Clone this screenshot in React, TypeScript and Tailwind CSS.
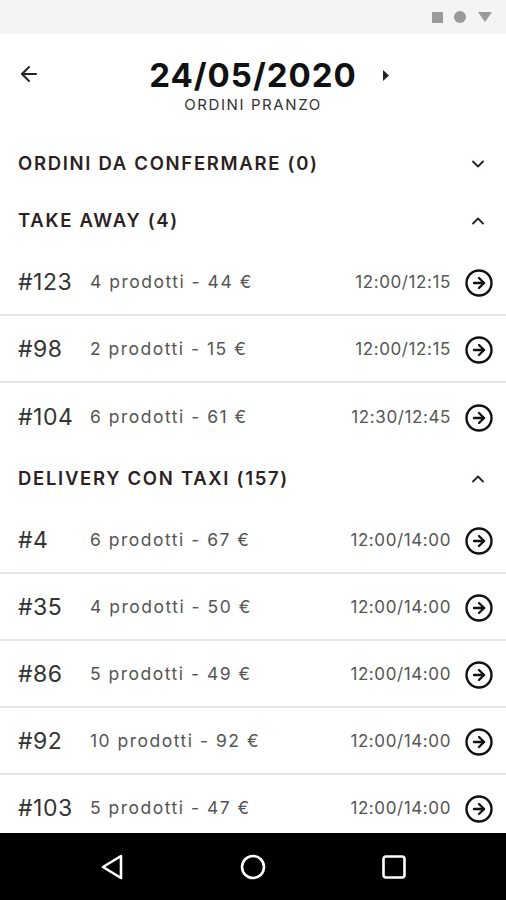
import { ArrowLeft, ChevronDown, ChevronUp, CircleArrowRight } from "lucide-react";

interface Order {
  id: string;
  products: string;
  time: string;
}

const takeAway: Order[] = [
  { id: "#123", products: "4 prodotti - 44 €", time: "12:00/12:15" },
  { id: "#98", products: "2 prodotti - 15 €", time: "12:00/12:15" },
  { id: "#104", products: "6 prodotti - 61 €", time: "12:30/12:45" },
];

const delivery: Order[] = [
  { id: "#4", products: "6 prodotti - 67 €", time: "12:00/14:00" },
  { id: "#35", products: "4 prodotti - 50 €", time: "12:00/14:00" },
  { id: "#86", products: "5 prodotti - 49 €", time: "12:00/14:00" },
  { id: "#92", products: "10 prodotti - 92 €", time: "12:00/14:00" },
  { id: "#103", products: "5 prodotti - 47 €", time: "12:00/14:00" },
];

function SectionHeader({ title, open }: { title: string; open: boolean }) {
  return (
    <div className="flex h-[57px] items-center justify-between pl-[18px] pr-[18px]">
      <span className="text-[18.5px] font-semibold tracking-[1.7px] text-[#2d1f24]">{title}</span>
      {open ? (
        <ChevronUp size={20} strokeWidth={2.2} className="text-[#2d1f24]" />
      ) : (
        <ChevronDown size={20} strokeWidth={2.2} className="text-[#2d1f24]" />
      )}
    </div>
  );
}

function OrderRow({ order, last }: { order: Order; last: boolean }) {
  return (
    <div
      className={`flex h-[67px] items-center pl-[18px] pr-[12px] pt-[2px] ${
        last ? "" : "border-b-2 border-[#e6e6e6]"
      }`}
    >
      <span className="min-w-[62px] text-[23px] tracking-[0.5px] text-[#333]">{order.id}</span>
      <span className="ml-[10px] text-[17.5px] tracking-[1.5px] text-[#555]">{order.products}</span>
      <span className="ml-auto text-[17px] tracking-[0.6px] text-[#555]">{order.time}</span>
      <CircleArrowRight size={30} strokeWidth={1.9} className="ml-[13px] text-[#111]" />
    </div>
  );
}

export default function App() {
  return (
    <div className="flex h-[900px] w-[506px] flex-col overflow-hidden bg-white font-['Inter','Noto_Sans',sans-serif]">
      {/* status bar */}
      <div className="flex h-[34px] items-center justify-end gap-[11px] bg-[#f4f4f4] pr-[13px]">
        <div className="h-[11px] w-[11px] bg-[#9a9a9a]" />
        <div className="h-[12px] w-[12px] rounded-full bg-[#9a9a9a]" />
        <svg width="16" height="12" viewBox="0 0 16 12">
          <path d="M1 1h14L8 11z" fill="#9a9a9a" />
        </svg>
      </div>

      {/* title */}
      <div className="relative flex h-[101px] flex-col items-center pt-[20px]">
        <ArrowLeft size={24} strokeWidth={2} className="absolute left-[17px] top-[28px] text-[#222]" />
        <span className="text-[33px] leading-[42px] font-bold tracking-[1px] text-[#111]">24/05/2020</span>
        <svg width="7" height="11" viewBox="0 0 7 11" className="absolute left-[383px] top-[36px]">
          <path d="M0 0l6 5.5L0 11z" fill="#222" />
        </svg>
        <span className="mt-[-2px] text-[15px] tracking-[1.6px] text-[#333]">ORDINI PRANZO</span>
      </div>

      <main className="flex-1 overflow-hidden">
        <SectionHeader title="ORDINI DA CONFERMARE (0)" open={false} />
        <SectionHeader title="TAKE AWAY (4)" open />
        {takeAway.map((o, i) => (
          <OrderRow key={o.id} order={o} last={i === takeAway.length - 1} />
        ))}
        <SectionHeader title="DELIVERY CON TAXI (157)" open />
        {delivery.map((o) => (
          <OrderRow key={o.id} order={o} last={false} />
        ))}
      </main>

      {/* nav bar */}
      <div className="flex h-[67px] items-center justify-center gap-[115px] bg-black">
        <svg width="26" height="28" viewBox="0 0 26 28">
          <path d="M22 3L4 14l18 11z" fill="none" stroke="white" strokeWidth="2.6" strokeLinejoin="round" />
        </svg>
        <svg width="26" height="26" viewBox="0 0 26 26">
          <circle cx="13" cy="13" r="11" fill="none" stroke="white" strokeWidth="2.6" />
        </svg>
        <svg width="26" height="26" viewBox="0 0 26 26">
          <rect x="2.5" y="2.5" width="21" height="21" rx="2.5" fill="none" stroke="white" strokeWidth="2.6" />
        </svg>
      </div>
    </div>
  );
}
